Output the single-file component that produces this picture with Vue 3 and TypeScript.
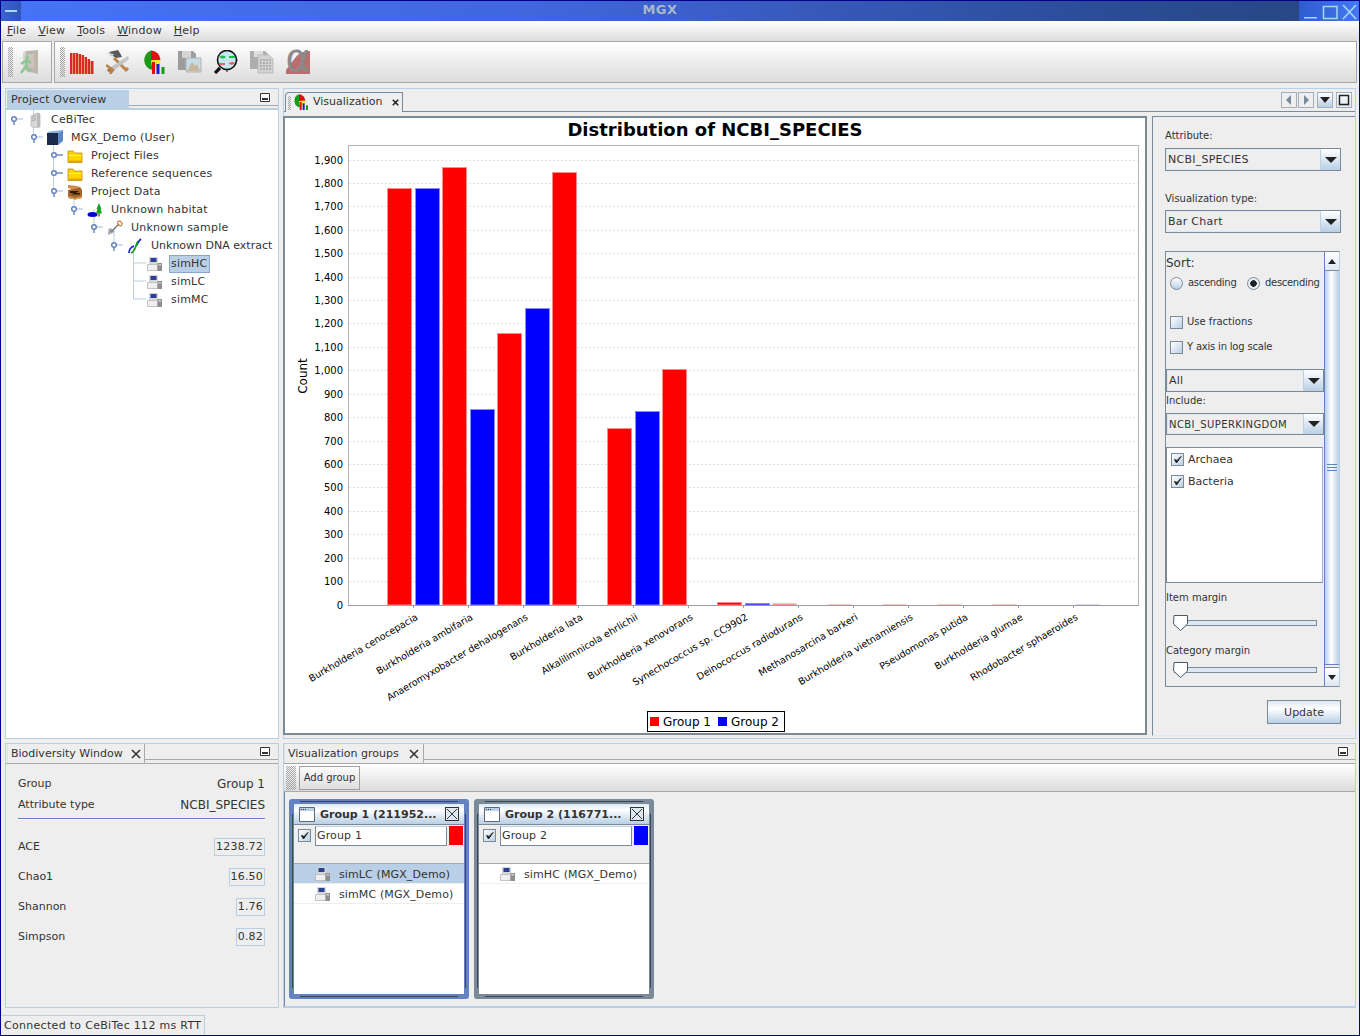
<template>
  <div class="window">
    <!-- icon sheet -->
    <svg class="sheet" width="0" height="0" aria-hidden="true">
      <symbol id="i-server" viewBox="0 0 16 16">
        <path d="M4 4 L10 1 L13 2 V15 L7 16 L4 14 Z" fill="#d8d8d8" stroke="#aaa" stroke-width=".6"/>
        <path d="M5 5 L9 3.5 M5 7 L9 5.5 M5 9 L9 7.5" stroke="#999" stroke-width=".8"/>
        <path d="M10 1 L13 2 V15 L10 15 Z" fill="#b9b9b9"/>
      </symbol>
      <symbol id="i-cube" viewBox="0 0 16 16">
        <path d="M0 3 H11 V15 H0 Z" fill="#1c2b4d"/>
        <path d="M11 3 L16 0 V11 L11 15 Z" fill="#5c88c9"/>
        <path d="M2 1.500 L16 0 L11 3 H0 Z" fill="#8fb0de"/>
      </symbol>
      <symbol id="i-folder" viewBox="0 0 16 16">
        <path d="M1 3 H6 L7.500 5 H15 V14.500 H1 Z" fill="#ffd500" stroke="#b88a10" stroke-width=".8"/>
        <path d="M1.500 7 H14.500 V8 H1.500 Z" fill="#ffee70"/>
        <path d="M1.500 12.500 H14.500 V14 H1.500 Z" fill="#e2a800"/>
      </symbol>
      <symbol id="i-box" viewBox="0 0 16 16">
        <path d="M1 6 L13 3 L15 6 V14 L8 15.500 L1 14 Z" fill="#a5642a"/>
        <path d="M1 1 L10 2 L13 3 L5 5 L1 4 Z" fill="#d08a44"/>
        <path d="M3 7 H12 L9 9 H13 V10.500 H4 L7 9 H3 Z" fill="#2d1a08"/>
        <path d="M1 12 L8 14 L15 12 V14 L8 15.500 L1 14 Z" fill="#d89a58"/>
      </symbol>
      <symbol id="i-habitat" viewBox="0 0 16 16">
        <ellipse cx="5.500" cy="12.500" rx="5" ry="2.500" fill="#0000dd"/>
        <path d="M12 1 L14.500 7 H13.500 L15 11.500 H9 L10.500 7 H9.500 Z" fill="#17a317"/>
        <path d="M11.300 11.500 H12.700 V14.500 H11.300 Z" fill="#7a4a1a"/>
      </symbol>
      <symbol id="i-sample" viewBox="0 0 16 16">
        <path d="M1 15 L1.500 9 L4 8 L7.500 12 Z" fill="#a8a8a8"/>
        <path d="M4 12 L12 4" stroke="#777" stroke-width="1.500"/>
        <path d="M11 5 L10.500 2 L13 1 L15.500 3.500 L14 6 Z" fill="none" stroke="#c9834a" stroke-width="1.200"/>
      </symbol>
      <symbol id="i-dna" viewBox="0 0 16 16">
        <path d="M2 15 C2 11 4 9 7 8 M9 8 C11 6 11 3 14 1" fill="none" stroke="#1b1be0" stroke-width="1.700"/>
        <path d="M4 15 C7 14 8 11 9 8 C9.500 6 10 4 11 3" fill="none" stroke="#13a013" stroke-width="1.700"/>
      </symbol>
      <symbol id="i-seq" viewBox="0 0 16 16">
        <path d="M2 1 H11 V8 H2 Z" fill="#d6d6d6"/>
        <path d="M3.500 2 H9.500 V6 H3.500 Z" fill="#2a3f97"/>
        <path d="M0.500 8.500 H10.500 V14.500 H0.500 Z" fill="#efefef" stroke="#b5b5b5" stroke-width=".8"/>
        <path d="M10.500 7 H15 V15 H10.500 Z" fill="#8e8e8e"/>
        <path d="M11.500 8 H14 V9.500 H11.500 Z" fill="#d0d0d0"/>
      </symbol>
      <symbol id="i-chart" viewBox="0 0 24 24">
        <path d="M9 10.500 L9 0.500 A9.500 10 0 0 1 18.500 10 Z" fill="#e21010"/>
        <path d="M9 10.500 L18.500 10 A9.500 10 0 0 1 10.500 20 Z" fill="#f2ec10"/>
        <path d="M9 10.500 L10.500 20 A9.500 10 0 0 1 9 0.500 Z" fill="#169c16"/>
        <path d="M10 12 H13 V24 H10 Z" fill="#e01010"/>
        <path d="M14.500 14 H17.500 V24 H14.500 Z" fill="#1a1ad0"/>
        <path d="M19.500 17 H22.500 V24 H19.500 Z" fill="#169c16"/>
      </symbol>
      <symbol id="i-exit" viewBox="0 0 24 24">
        <path d="M8 1 L20 0 V24 L8 21 Z" fill="#bdb6aa"/>
        <path d="M8 1 L5 2 V22 L8 21 Z" fill="#d9d5cc"/>
        <path d="M9.500 4 H16 V18 H9.500 Z" fill="#cbc6bc"/>
        <circle cx="9" cy="7.500" r="2" fill="#8cc897"/>
        <path d="M8.500 10 L3 14 M8.500 10 L13 13 M8.500 10 L8 16 L3 23 M8 16 L12 22" stroke="#8cc897" stroke-width="2.400" fill="none"/>
      </symbol>
      <symbol id="i-bars" viewBox="0 0 24 24">
        <path d="M0 3 H2 V24 H0 Z M3 3 H5 V24 H3 Z M6 3 H8 V24 H6 Z M9 4 H11 V24 H9 Z M12 5 H14 V24 H12 Z M15 7 H17 V24 H15 Z M18 9 H20 V24 H18 Z M21 11 H23.500 V24 H21 Z" fill="#d62a2a"/>
        <path d="M2 3 H3 V24 H2 Z M5 3 H6 V24 H5 Z M8 4 H9 V24 H8 Z M11 5 H12 V24 H11 Z M14 7 H15 V24 H14 Z M17 9 H18 V24 H17 Z M20 11 H21 V24 H20 Z" fill="#ef9a6a"/>
      </symbol>
      <symbol id="i-tools" viewBox="0 0 24 24">
        <path d="M3 2 L12 0 L14 3 L16 7 L10 8 L7 6 Z" fill="#5a5a5a"/>
        <path d="M1 3 L8 4 L6 7 Z" fill="#cfcfcf"/>
        <path d="M8 8 L20 20 L22 18" stroke="#b9834a" stroke-width="3" fill="none"/>
        <path d="M2 19 L22 6 L23 9 L6 22 Z" fill="#c4c4c4"/>
        <path d="M2 19 L6 22" stroke="#aa7a44" stroke-width="4"/>
        <path d="M0 15 L7 20 L4 24" stroke="#b9834a" stroke-width="2.500" fill="none"/>
      </symbol>
      <symbol id="i-floppy-pic" viewBox="0 0 24 24">
        <path d="M0 1 H15 L18 4 V20 H0 Z" fill="#9c9c9c"/>
        <path d="M4 1 H13 V8 H4 Z" fill="#d5d5d5"/>
        <path d="M8 8 H23 V22 H8 Z" fill="#c4dde7" stroke="#b2b2b2"/>
        <path d="M9 21 L14 12 L17 16 L19 14 L22 21 Z" fill="#c8b79c"/>
      </symbol>
      <symbol id="i-search" viewBox="0 0 24 24">
        <circle cx="13" cy="10" r="9.500" fill="#c5e7f1" stroke="#111" stroke-width="1.600"/>
        <path d="M5 7 Q9 4 12 7 Q9 10 5 7 Z" fill="#15c04a"/>
        <path d="M15 6 H21 V8 H15 Z" fill="#15c04a"/>
        <path d="M5 13 H11 V15 H5 Z M15 13 Q19 11 21 13 Q19 16 15 14 Z" fill="#e8605c"/>
        <path d="M13 0 V-1 M23.500 10 H24 M13 20 V22" stroke="#111"/>
        <path d="M6 18 L1 23" stroke="#111" stroke-width="3.200"/>
      </symbol>
      <symbol id="i-floppy-doc" viewBox="0 0 24 24">
        <path d="M0 1 H15 L18 4 V19 H0 Z" fill="#adadad"/>
        <path d="M4 1 H13 V7 H4 Z" fill="#dedede"/>
        <path d="M8 5 H19 L23 9 V23 H8 Z" fill="#d2d2d2" stroke="#bbb"/>
        <path d="M10 10 H21 M10 13 H21 M10 16 H21 M10 19 H21" stroke="#8d8d8d" stroke-dasharray="2 1"/>
      </symbol>
      <symbol id="i-alpha" viewBox="0 0 24 24">
        <path d="M0 20 L9 8 Q14 1 24 1 V24 H0 Z" fill="#bb6e6e"/>
      </symbol>
      <symbol id="i-frame" viewBox="0 0 16 16">
        <path d="M.5 1.500 H15.500 V15.500 H.5 Z" fill="#fff" stroke="#5a6878"/>
        <path d="M1 2 H15 V5 H1 Z" fill="#b8cfe5"/>
        <path d="M2 3.500 H3 M4 3.500 H5 M6 3.500 H7" stroke="#333"/>
      </symbol>
      <symbol id="i-x" viewBox="0 0 10 10">
        <path d="M1 1 L9 9 M9 1 L1 9" stroke="#333" stroke-width="1.600"/>
      </symbol>
      <symbol id="i-check" viewBox="0 0 13 13">
        <path d="M3.500 6.500 L5.500 10 L10 3.500 L6 7.500 Z" fill="#222" stroke="#222"/>
      </symbol>
      <symbol id="i-min" viewBox="0 0 10 9">
        <path d="M.5 .5 H9.500 V8.500 H.5 Z" fill="#fff" stroke="#333"/>
        <path d="M2 5 H8 V7 H2 Z" fill="#333"/>
      </symbol>
    </svg>

    <header class="titlebar">
      <div class="tb-menu"><span class="tb-dash"></span></div>
      <div class="tb-title">MGX</div>
      <div class="tb-buttons">
        <svg width="60" height="20" viewBox="0 0 60 20">
          <path d="M5 16 H18 V17.500 H5 Z" fill="#a6d8f2"/>
          <rect x="24.500" y="5.500" width="13.500" height="12" fill="none" stroke="#a6d8f2" stroke-width="1.500"/>
          <path d="M44 4 L57 18 M57 4 L44 18" stroke="#a6d8f2" stroke-width="1.600"/>
        </svg>
      </div>
    </header>

    <nav class="menubar">
      <span v-for="m in menus" :key="m.rest" class="menu-item"><u>{{ m.key }}</u>{{ m.rest }}</span>
    </nav>

    <div class="toolbars">
      <div class="toolbar toolbar-short">
        <span class="grip"></span>
        <svg class="tool-icon exit-icon"><use href="#i-exit" /></svg>
      </div>
      <div class="toolbar toolbar-long">
        <span class="grip"></span>
        <span v-for="t in tools" :key="t" class="tool-slot">
          <svg class="tool-icon"><use :href="`#${t}`" /></svg>
          <span v-if="t === 'i-alpha'" class="alpha-mark">α</span>
        </span>
      </div>
    </div>

    <main class="workspace">
      <!-- project overview -->
      <section class="panel">
        <div class="panel-head head-active">
          <div class="dock-tab tab-project">Project Overview</div>
          <div class="head-fill">
            <svg class="min-btn"><use href="#i-min" /></svg>
          </div>
        </div>
        <div class="tree">
          <svg class="tree-lines" width="272" height="210" viewBox="6 110 272 210">
            <path d="M33.500 110 V137 M53.500 137 V191 M74 191 V209 M94 209 V227 M114 227 V245 M133.500 245 V299 M133.500 263 H146 M133.500 281 H146 M133.500 299 H146" stroke="#b8cfe5" fill="none" />
            <g v-for="(n, i) in treeNodes" :key="n.label">
              <template v-if="n.handle !== 'none'">
                <path :d="`M${handleX(n.depth) + 3} ${rowY(i)} H${handleX(n.depth) + 9}`" :stroke="n.handle === 'closed' ? '#6382bf' : '#b8cfe5'" stroke-width="1.400" />
                <path v-if="n.handle === 'open'" :d="`M${handleX(n.depth)} ${rowY(i)} V${rowY(i) + 6}`" stroke="#6382bf" stroke-width="1.400" />
                <circle :cx="handleX(n.depth)" :cy="rowY(i)" r="2.300" fill="#fff" stroke="#6382bf" stroke-width="1.500" />
              </template>
            </g>
          </svg>
          <div v-for="n in treeNodes" :key="n.label" class="tree-row" :style="{ paddingLeft: 21 + n.depth * 20 + 'px' }">
            <svg class="node-icon"><use :href="`#${n.icon}`" /></svg>
            <span class="node-label" :class="{ 'node-selected': n.selected, 'node-tight': n.tight }">{{ n.label }}</span>
          </div>
        </div>
      </section>

      <!-- visualization -->
      <section class="panel">
        <div class="viz-head">
          <div class="viz-tab">
            <span class="grip grip-tab"></span>
            <svg class="tab-icon"><use href="#i-chart" /></svg>
            <span class="viz-tab-label">Visualization</span>
            <svg class="tab-close" viewBox="0 0 10 10"><path d="M2 2 L8 8 M8 2 L2 8" stroke="#222" stroke-width="1.800" /></svg>
          </div>
          <div class="viz-nav">
            <span class="nav-btn nav-left"><svg width="14" height="14"><path d="M9 2 V12 L4 7 Z" fill="#7a8a99" /></svg></span>
            <span class="nav-btn nav-right"><svg width="14" height="14"><path d="M5 2 V12 L10 7 Z" fill="#7a8a99" /></svg></span>
            <span class="nav-btn nav-drop"><svg width="14" height="14"><path d="M2 4 H12 L7 10 Z" fill="#222" /></svg></span>
            <span class="nav-btn nav-max"><svg width="14" height="14"><rect x="2.500" y="2.500" width="9" height="9" fill="none" stroke="#222" stroke-width="1.500" /></svg></span>
          </div>
        </div>
        <div class="viz-body">
          <div class="chart-frame">
            <svg class="chart" width="860" height="615" viewBox="285 118 860 615">
              <text x="715" y="136" text-anchor="middle" class="chart-title">Distribution of NCBI_SPECIES</text>
              <rect x="348.500" y="145.500" width="790" height="460" fill="#fff" stroke="#b4b4b4" />
              <g v-for="v in gridValues" :key="v">
                <line v-if="v > 0" x1="349" :x2="1138" :y1="lineY(v)" :y2="lineY(v)" stroke="#e2e2e2" stroke-dasharray="2 2" />
                <text x="343" :y="lineY(v) + 3.5" text-anchor="end" class="axis-num">{{ v === 0 ? '0' : v.toLocaleString('en-US') }}</text>
              </g>
              <text class="axis-name" transform="translate(307 376) rotate(-90)" text-anchor="middle">Count</text>
              <line x1="348" x2="1139" y1="605.500" y2="605.500" stroke="#9c9c9c" />
              <g v-for="(c, i) in categories" :key="c.name">
                <line :x1="tickX(i)" :x2="tickX(i)" y1="606" y2="608" stroke="#9c9c9c" />
                <rect v-if="c.red" :x="tickX(i) - 26" :y="lineY(c.red)" width="24" :height="605 - lineY(c.red)" :class="c.red < 8 ? 'bar-faint-r' : 'bar-r'" />
                <rect v-if="c.blue" :x="tickX(i) + 2" :y="lineY(c.blue)" width="24" :height="605 - lineY(c.blue)" :class="c.blue < 4 ? 'bar-faint-b' : 'bar-b'" />
                <text :transform="`translate(${tickX(i) + 5} 619) rotate(-30.5)`" text-anchor="end" class="cat-label">{{ c.name }}</text>
              </g>
              <rect x="647.500" y="711.500" width="137" height="20" fill="#fff" stroke="#000" />
              <rect x="650" y="717" width="9" height="9" fill="#f00" />
              <text x="663" y="726" class="legend-text">Group 1</text>
              <rect x="718" y="717" width="9" height="9" fill="#00f" />
              <text x="731" y="726" class="legend-text">Group 2</text>
            </svg>
          </div>

          <aside class="config">
            <label class="cfg-label cfg-first">Attribute:</label>
            <div class="combo cfg-combo"><span class="combo-text">NCBI_SPECIES</span><span class="combo-arrow"><svg width="12" height="8"><path d="M0 1 H12 L6 7 Z" fill="#222" /></svg></span></div>
            <label class="cfg-label cfg-second">Visualization type:</label>
            <div class="combo cfg-combo"><span class="combo-text">Bar Chart</span><span class="combo-arrow"><svg width="12" height="8"><path d="M0 1 H12 L6 7 Z" fill="#222" /></svg></span></div>

            <div class="scroll-pane">
              <div class="scroll-content">
                <div class="sort-title">Sort:</div>
                <div class="radio-row">
                  <span class="radio-item"><span class="radio"></span>ascending</span>
                  <span class="radio-item"><span class="radio radio-on"></span>descending</span>
                </div>
                <div class="check-row row-fractions"><span class="check"></span>Use fractions</div>
                <div class="check-row row-log"><span class="check"></span>Y axis in log scale</div>
                <div class="combo combo-all"><span class="combo-text">All</span><span class="combo-arrow"><svg width="12" height="8"><path d="M0 1 H12 L6 7 Z" fill="#222" /></svg></span></div>
                <div class="cfg-label inc-label">Include:</div>
                <div class="combo combo-inc"><span class="combo-text text-small">NCBI_SUPERKINGDOM</span><span class="combo-arrow"><svg width="12" height="8"><path d="M0 1 H12 L6 7 Z" fill="#222" /></svg></span></div>
                <div class="check-list">
                  <div v-for="k in kingdoms" :key="k" class="list-row"><span class="check"><svg width="13" height="13"><use href="#i-check" /></svg></span>{{ k }}</div>
                </div>
                <div class="cfg-label item-label">Item margin</div>
                <svg class="slider slider-a" width="145" height="16">
                  <rect x="1.500" y="5.500" width="142" height="5" fill="#dde8f3" stroke="#7a8a99" />
                  <path d="M1 .5 H14.500 V9 L7.500 15.500 L.5 9 Z" fill="#fff" stroke="#4a5868" />
                </svg>
                <div class="cfg-label cat-margin-label">Category margin</div>
                <svg class="slider slider-b" width="145" height="16">
                  <rect x="1.500" y="5.500" width="142" height="5" fill="#dde8f3" stroke="#7a8a99" />
                  <path d="M1 .5 H14.500 V9 L7.500 15.500 L.5 9 Z" fill="#fff" stroke="#4a5868" />
                </svg>
              </div>
              <div class="scrollbar">
                <div class="sb-btn"><svg width="14" height="8"><path d="M3 7 H11 L7 2 Z" fill="#222" /></svg></div>
                <div class="sb-thumb"><span class="sb-lines"></span></div>
                <div class="sb-btn"><svg width="14" height="8"><path d="M3 2 H11 L7 7 Z" fill="#222" /></svg></div>
              </div>
            </div>
            <button class="update-btn">Update</button>
          </aside>
        </div>
      </section>

      <!-- biodiversity -->
      <section class="panel">
        <div class="panel-head">
          <div class="dock-tab tab-bio">Biodiversity Window<svg class="tab-x"><use href="#i-x" /></svg></div>
          <div class="head-fill">
            <svg class="min-btn"><use href="#i-min" /></svg>
          </div>
        </div>
        <div class="bio">
          <div class="bio-row"><span>Group</span><span class="bio-big">Group 1</span></div>
          <div class="bio-row bio-row-2"><span>Attribute type</span><span class="bio-big">NCBI_SPECIES</span></div>
          <div class="bio-sep"></div>
          <div v-for="s in stats" :key="s.name" class="stat-row">
            <span>{{ s.name }}</span>
            <span class="stat-box">{{ s.value }}</span>
          </div>
        </div>
      </section>

      <!-- groups -->
      <section class="panel">
        <div class="panel-head">
          <div class="dock-tab tab-groups">Visualization groups<svg class="tab-x"><use href="#i-x" /></svg></div>
          <div class="head-fill">
            <svg class="min-btn min-right"><use href="#i-min" /></svg>
          </div>
        </div>
        <div class="group-toolbar">
          <span class="grip grip-wide"></span>
          <button class="add-btn">Add group</button>
        </div>
        <div class="group-area">
          <div v-for="g in groups" :key="g.name" class="group-frame" :class="{ 'frame-active': g.active }">
            <div class="frame-title">
              <svg class="frame-icon"><use href="#i-frame" /></svg>
              <span class="frame-name">{{ g.title }}</span>
              <span class="frame-close"><svg width="12" height="12" viewBox="0 0 12 12"><path d="M1 1 L11 11 M11 1 L1 11" stroke="#333" /></svg></span>
            </div>
            <div class="frame-edit">
              <span class="check"><svg width="13" height="13"><use href="#i-check" /></svg></span>
              <span class="frame-input">{{ g.name }}</span>
              <span class="frame-color" :style="{ background: g.color }"></span>
            </div>
            <div class="frame-header"></div>
            <div class="frame-list">
              <div v-for="r in g.rows" :key="r.label" class="frame-row" :class="{ 'frame-row-sel': r.selected }">
                <svg class="node-icon"><use href="#i-seq" /></svg>
                {{ r.label }}
              </div>
            </div>
          </div>
        </div>
      </section>
    </main>

    <footer class="statusbar">
      <div class="status-cell">Connected to CeBiTec 112 ms RTT</div>
    </footer>
  </div>
</template>

<script setup lang="ts">
interface TreeNode {
  label: string;
  depth: number;
  icon: string;
  handle: 'open' | 'closed' | 'none';
  selected?: boolean;
  tight?: boolean;
}

const menus = [
  { key: 'F', rest: 'ile' },
  { key: 'V', rest: 'iew' },
  { key: 'T', rest: 'ools' },
  { key: 'W', rest: 'indow' },
  { key: 'H', rest: 'elp' },
];

const tools = ['i-bars', 'i-tools', 'i-chart', 'i-floppy-pic', 'i-search', 'i-floppy-doc', 'i-alpha'];

const treeNodes: TreeNode[] = [
  { label: 'CeBiTec', depth: 0, icon: 'i-server', handle: 'open' },
  { label: 'MGX_Demo (User)', depth: 1, icon: 'i-cube', handle: 'open' },
  { label: 'Project Files', depth: 2, icon: 'i-folder', handle: 'closed' },
  { label: 'Reference sequences', depth: 2, icon: 'i-folder', handle: 'closed' },
  { label: 'Project Data', depth: 2, icon: 'i-box', handle: 'open' },
  { label: 'Unknown habitat', depth: 3, icon: 'i-habitat', handle: 'open' },
  { label: 'Unknown sample', depth: 4, icon: 'i-sample', handle: 'open' },
  { label: 'Unknown DNA extract', depth: 5, icon: 'i-dna', handle: 'open', tight: true },
  { label: 'simHC', depth: 6, icon: 'i-seq', handle: 'none', selected: true },
  { label: 'simLC', depth: 6, icon: 'i-seq', handle: 'none' },
  { label: 'simMC', depth: 6, icon: 'i-seq', handle: 'none' },
];

const handleX = (depth: number) => 14 + depth * 20;
const rowY = (i: number) => 119 + i * 18;

const gridValues = Array.from({ length: 20 }, (_, i) => i * 100);
const lineY = (v: number) => Math.floor(605 - v * 0.2342) + 0.5;
const tickX = (i: number) => 413.5 + i * 55;

const categories = [
  { name: 'Burkholderia cenocepacia', red: 1780, blue: 1780 },
  { name: 'Burkholderia ambifaria', red: 1870, blue: 835 },
  { name: 'Anaeromyxobacter dehalogenans', red: 1160, blue: 1265 },
  { name: 'Burkholderia lata', red: 1845, blue: 0 },
  { name: 'Alkalilimnicola ehrlichii', red: 755, blue: 825 },
  { name: 'Burkholderia xenovorans', red: 1005, blue: 0 },
  { name: 'Synechococcus sp. CC9902', red: 10, blue: 7 },
  { name: 'Deinococcus radiodurans', red: 7, blue: 0 },
  { name: 'Methanosarcina barkeri', red: 4, blue: 0 },
  { name: 'Burkholderia vietnamiensis', red: 3, blue: 0 },
  { name: 'Pseudomonas putida', red: 3, blue: 0 },
  { name: 'Burkholderia glumae', red: 3, blue: 0 },
  { name: 'Rhodobacter sphaeroides', red: 0, blue: 3 },
];

const kingdoms = ['Archaea', 'Bacteria'];

const stats = [
  { name: 'ACE', value: '1238.72' },
  { name: 'Chao1', value: '16.50' },
  { name: 'Shannon', value: '1.76' },
  { name: 'Simpson', value: '0.82' },
];

const groups = [
  {
    name: 'Group 1',
    title: 'Group 1 (211952...',
    color: '#f00',
    active: true,
    rows: [
      { label: 'simLC (MGX_Demo)', selected: true },
      { label: 'simMC (MGX_Demo)', selected: false },
    ],
  },
  {
    name: 'Group 2',
    title: 'Group 2 (116771...',
    color: '#00f',
    active: false,
    rows: [{ label: 'simHC (MGX_Demo)', selected: false }],
  },
];
</script>

<style>
html,
body {
  margin: 0;
  background: #eee;
}
</style>

<style scoped>
.window {
  box-sizing: border-box;
  width: 1360px;
  height: 1036px;
  border: 1px solid #00008b;
  background: #eee;
  font-family: "DejaVu Sans", sans-serif;
  font-size: 11px;
  color: #333;
  display: flex;
  flex-direction: column;
  overflow: hidden;
}

.sheet {
  position: absolute;
}

.titlebar {
  height: 20px;
  display: flex;
  align-items: stretch;
  background: linear-gradient(90deg, #4474f6 0%, #4166dc 40%, #2c4d98 80%, #27457f 100%);
}

.tb-menu {
  width: 20px;
  background: linear-gradient(90deg, #3a63d4, #2f55b8);
  display: flex;
  align-items: center;
  justify-content: center;
}

.tb-dash {
  width: 12px;
  height: 2px;
  background: #a6d8f2;
}

.tb-title {
  flex: 1;
  text-align: center;
  font-weight: bold;
  font-size: 13px;
  letter-spacing: .5px;
  line-height: 17px;
  color: #a9b7cf;
}

.tb-buttons {
  width: 60px;
  background: linear-gradient(90deg, #2e5bd0, #4478f2);
}

.menubar {
  height: 20px;
  box-sizing: border-box;
  display: flex;
  align-items: center;
  gap: 12px;
  padding: 0 0 2px 6px;
  letter-spacing: .2px;
  background: linear-gradient(#fff, #dcdcdc);
}

.toolbars {
  height: 42px;
  display: flex;
  gap: 2px;
  padding-left: 1px;
  padding-right: 2px;
}

.toolbar {
  box-sizing: border-box;
  border: 1px solid #a8a8a8;
  background: linear-gradient(#fff, #dcdcdc);
  display: flex;
  align-items: center;
  padding-left: 5px;
}

.toolbar-short {
  width: 50px;
}

.toolbar-long {
  flex: 1;
  padding-left: 5px;
}

.toolbar-long .grip {
  margin-right: -1px;
}

.grip {
  flex: none;
  width: 5px;
  height: 30px;
  background: repeating-conic-gradient(#a4a4a4 0 25%, transparent 0 50%) 0 0 / 2px 2px;
}

.tool-icon {
  width: 24px;
  height: 24px;
}

.exit-icon {
  margin-left: 5px;
}

.tool-slot {
  position: relative;
  width: 36px;
  height: 24px;
  display: flex;
  justify-content: center;
}

.alpha-mark {
  position: absolute;
  inset: 0;
  text-align: center;
  font-size: 38px;
  line-height: 16px;
  color: #8a8a8a;
}

.workspace {
  flex: 1;
  display: grid;
  grid-template-columns: 274px 1073px;
  grid-template-rows: 651px 265px;
  gap: 4px;
  padding: 5px 0 0 4px;
}

.panel {
  box-sizing: border-box;
  border: 1px solid #b8cfe5;
  display: flex;
  flex-direction: column;
  min-width: 0;
}

.panel-head {
  height: 20px;
  box-sizing: border-box;
  flex: none;
  display: flex;
  border-bottom: 1px solid #a8a8a8;
  padding-top: 0;
}

.head-active {
  border-bottom: 2px solid #b8cfe5;
  padding-top: 1px;
  height: 21px;
}

.dock-tab {
  box-sizing: border-box;
  display: flex;
  align-items: center;
  padding-left: 3px;
  margin-left: 1px;
  border-right: 1px solid #a8a8a8;
  border-left: 1px solid #e0e0e0;
  line-height: 14px;
}

.tab-project {
  width: 122px;
  background: #b8cfe5;
  border: 0;
  padding-top: 1px;
  padding-left: 4px;
  letter-spacing: .15px;
}

.tab-bio {
  width: 138px;
}

.tab-groups {
  width: 140px;
  margin-left: 0;
  padding-left: 3px;
}

.tab-x {
  width: 10px;
  height: 10px;
  margin-left: auto;
  margin-right: 3px;
}

.head-fill {
  flex: 1;
  height: 15px;
  border-bottom: 1px solid #a8a8a8;
  display: flex;
  align-items: center;
  justify-content: flex-end;
  padding-right: 8px;
}

.min-btn {
  width: 10px;
  height: 9px;
}

.tree {
  position: relative;
  flex: 1;
  background: #fff;
  padding-top: 1px;
}

.tree-lines {
  position: absolute;
  left: 0;
  top: 0;
}

.tree-row {
  position: relative;
  height: 18px;
  display: flex;
  align-items: center;
  gap: 6px;
  white-space: nowrap;
}

.node-icon {
  width: 16px;
  height: 16px;
  flex: none;
}

.node-label {
  padding: 1px;
  line-height: 14px;
  border: 1px solid transparent;
  letter-spacing: .2px;
}

.node-tight {
  letter-spacing: 0;
}

.node-selected {
  background: #b8cfe5;
  border-color: #8aa6cf;
  padding-right: 2px;
}

/* visualization */
.viz-head {
  height: 23px;
  flex: none;
  box-sizing: border-box;
  display: flex;
  padding-top: 3px;
  border-bottom: 1px solid #7a8a99;
}

.viz-tab {
  box-sizing: border-box;
  width: 118px;
  height: 20px;
  margin-left: 1px;
  border: 1px solid #7a8a99;
  border-bottom: 0;
  border-radius: 4px 0 0 0;
  background: #eee;
  display: flex;
  align-items: center;
}

.grip-tab {
  width: 3px;
  height: 14px;
  margin-left: 2px;
}

.tab-icon {
  width: 16px;
  height: 16px;
  margin: 0 0 2px 2px;
}

.viz-tab-label {
  margin: 0 0 2px 4px;
}

.tab-close {
  width: 9px;
  height: 9px;
  margin-left: 9px;
}

.viz-nav {
  margin-left: auto;
  display: flex;
  padding-right: 3px;
  height: 16px;
}

.nav-btn {
  box-sizing: border-box;
  width: 16px;
  height: 16px;
  border: 1px solid #a3b0bc;
  display: flex;
  align-items: center;
  justify-content: center;
  margin-left: 1px;
}

.nav-drop {
  margin-left: 3px;
  background: linear-gradient(#fff, #b8cfe5);
}

.nav-max {
  margin-left: 3px;
  background: linear-gradient(#fff, #dde8f3);
}

.viz-body {
  flex: 1;
  display: flex;
  gap: 5px;
  padding-top: 4px;
  min-height: 0;
}

.chart-frame {
  box-sizing: border-box;
  width: 864px;
  height: 619px;
  margin-left: -1px;
  border: 2px solid #7a8a99;
  background: #fff;
  flex: none;
}

.chart {
  display: block;
}

.chart-title {
  font-size: 18px;
  font-weight: bold;
  fill: #000;
}

.axis-num {
  font-size: 10px;
  fill: #000;
}

.axis-name {
  font-size: 12px;
  fill: #000;
}

.cat-label {
  font-size: 9.6px;
  fill: #000;
}

.legend-text {
  font-size: 12px;
  fill: #000;
}

.bar-r {
  fill: #f00;
  stroke: #ff8a8a;
  stroke-width: 1;
}

.bar-b {
  fill: #00f;
  stroke: #8a8aff;
  stroke-width: 1;
}

.bar-faint-r {
  fill: #ff9090;
}

.bar-faint-b {
  fill: #b4b4ff;
}

.config {
  flex: 1;
  box-sizing: border-box;
  height: 620px;
  border-left: 1px solid #7a8a99;
  border-top: 1px solid #7a8a99;
  border-bottom: 1px solid #dde8f3;
  padding-left: 12px;
  display: flex;
  flex-direction: column;
}

.cfg-label {
  display: block;
  font-size: 10px;
  line-height: 12px;
  height: 12px;
}

.cfg-first {
  margin-top: 13px;
}

.cfg-second {
  margin-top: 22px;
}

.combo {
  box-sizing: border-box;
  display: flex;
  border: 1px solid #7a8a99;
  background: #eee;
}

.cfg-combo {
  width: 176px;
  height: 23px;
  margin-top: 6px;
}

.cfg-second + .cfg-combo {
  margin-top: 5px;
}

.combo-text {
  flex: 1;
  box-sizing: border-box;
  border: 1px solid #dde8f3;
  border-right: 1px solid #b8cfe5;
  padding-left: 1px;
  line-height: 19px;
  letter-spacing: .25px;
}

.text-small {
  font-size: 10px;
  letter-spacing: .4px;
}

.combo-arrow {
  width: 19px;
  display: flex;
  align-items: center;
  justify-content: center;
  background: linear-gradient(#fff, #b8cfe5);
}

.scroll-pane {
  box-sizing: border-box;
  width: 175px;
  height: 436px;
  margin-top: 18px;
  border: 1px solid #7a8a99;
  border-right-color: #b8cfe5;
  display: flex;
}

.scroll-content {
  width: 158px;
  flex: none;
  display: flex;
  flex-direction: column;
}

.sort-title {
  font-size: 12px;
  line-height: 14px;
  margin-top: 4px;
}

.radio-row {
  display: flex;
  margin-top: 6px;
  padding-left: 4px;
  font-size: 10px;
  line-height: 14px;
  white-space: nowrap;
  letter-spacing: -.3px;
}

.radio-item {
  width: 77px;
  display: flex;
  align-items: center;
  gap: 5px;
}

.radio {
  box-sizing: border-box;
  width: 13px;
  height: 13px;
  border: 1px solid #7a8a99;
  border-radius: 50%;
  background: linear-gradient(#fff, #b8cfe5);
  flex: none;
}

.radio-on {
  background: radial-gradient(circle, #222 0 3px, #e4eef6 3.5px);
}

.check-row {
  display: flex;
  align-items: center;
  gap: 4px;
  padding-left: 4px;
  font-size: 10px;
  line-height: 14px;
  height: 14px;
}

.row-fractions {
  margin-top: 25px;
}

.row-log {
  margin-top: 11px;
  letter-spacing: -.2px;
}

.check {
  box-sizing: border-box;
  width: 13px;
  height: 13px;
  flex: none;
  border: 1px solid #7a8a99;
  background: linear-gradient(135deg, #fff, #b8cfe5);
  display: flex;
  align-items: center;
  justify-content: center;
}

.check svg {
  flex: none;
  margin: -1px;
}

.combo-all {
  margin-top: 15px;
  height: 23px;
}

.inc-label {
  margin-top: 3px;
}

.combo-inc {
  margin-top: 6px;
  height: 22px;
}

.check-list {
  box-sizing: border-box;
  margin-top: 12px;
  width: 157px;
  height: 136px;
  background: #fff;
  border: 1px solid #7a8a99;
  border-right-color: #a3b0bc;
  padding-left: 4px;
}

.list-row {
  height: 22px;
  display: flex;
  align-items: center;
  gap: 4px;
}

.item-label {
  margin-top: 9px;
}

.slider {
  display: block;
  margin-left: 7px;
}

.slider-a {
  margin-top: 11px;
}

.cat-margin-label {
  margin-top: 14px;
}

.slider-b {
  margin-top: 5px;
}

.scrollbar {
  flex: 1;
  display: flex;
  flex-direction: column;
  border-left: 1px solid #6382bf;
}

.sb-btn {
  height: 18px;
  flex: none;
  display: flex;
  align-items: center;
  justify-content: center;
  background: linear-gradient(#fff, #dde8f3);
  border-bottom: 1px solid #7a8a99;
}

.sb-btn:last-child {
  border-bottom: 0;
  border-top: 1px solid #7a8a99;
}

.sb-thumb {
  flex: 1;
  margin-bottom: 2px;
  border-bottom: 1px solid #6382bf;
  background: linear-gradient(90deg, #b8cfe5, #fff 45%, #b8cfe5);
  display: flex;
  align-items: center;
  justify-content: center;
}

.sb-lines {
  width: 10px;
  height: 5px;
  border-top: 1px solid #6382bf;
  border-bottom: 1px solid #6382bf;
  background: linear-gradient(#6382bf, #6382bf) center / 100% 1px no-repeat;
}

.update-btn {
  box-sizing: border-box;
  width: 74px;
  height: 24px;
  margin: 13px 0 0 102px;
  border: 1px solid #7a8a99;
  background: linear-gradient(#dde8f3, #fff 35%, #b8cfe5);
  font: inherit;
  color: #333;
  padding: 0;
}

/* biodiversity */
.bio {
  padding: 13px 13px 0 12px;
}

.bio-row {
  display: flex;
  justify-content: space-between;
  height: 14px;
  line-height: 14px;
}

.bio-row-2 {
  margin-top: 7px;
}

.bio-big {
  font-size: 12px;
}

.bio-sep {
  margin-top: 6px;
  height: 1px;
  background: #6382bf;
  border-bottom: 1px solid #fff;
}

.stat-row {
  display: flex;
  justify-content: space-between;
  align-items: center;
  height: 17px;
  margin-top: 13px;
}

.bio-sep + .stat-row {
  margin-top: 18px;
}

.stat-box {
  box-sizing: border-box;
  height: 18px;
  line-height: 16px;
  padding: 0 1px;
  border: 1px solid #b8cfe5;
  font-size: 11px;
  letter-spacing: .2px;
}

/* groups */
.tab-groups .tab-x {
  margin-right: 4px;
}

.min-right {
  margin-right: -1px;
}

.group-toolbar {
  height: 28px;
  flex: none;
  box-sizing: border-box;
  display: flex;
  align-items: center;
  background: linear-gradient(#fff, #dcdcdc);
  border-bottom: 1px solid #a8a8a8;
  padding-left: 2px;
}

.grip-wide {
  width: 10px;
  height: 24px;
}

.add-btn {
  box-sizing: border-box;
  width: 61px;
  height: 24px;
  margin-left: 3px;
  padding: 0;
  border: 1px solid #a0a0a0;
  background: transparent;
  font: inherit;
  font-size: 10px;
  color: #333;
}

.group-area {
  flex: 1;
  display: flex;
  gap: 5px;
  padding: 7px 0 0 4px;
  border-left: 1px solid #7a8a99;
  border-bottom: 1px solid #b8cfe5;
}

.group-frame {
  position: relative;
  box-sizing: border-box;
  width: 180px;
  height: 200px;
  border: 5px solid #7a8a99;
  border-radius: 3px;
  background: #fff;
  display: flex;
  flex-direction: column;
}

.frame-active {
  border-color: #6382bf;
}

.group-frame::before {
  content: "";
  position: absolute;
  left: 6px;
  right: 6px;
  top: -3px;
  bottom: -3px;
  border-top: 1px solid #3a4654;
  border-bottom: 1px solid #3a4654;
  pointer-events: none;
}

.group-frame::after {
  content: "";
  position: absolute;
  left: -2px;
  right: -2px;
  top: 10px;
  bottom: 6px;
  border-left: 1px solid #3a4654;
  border-right: 1px solid #3a4654;
  pointer-events: none;
}

.frame-title {
  height: 21px;
  flex: none;
  box-sizing: border-box;
  display: flex;
  align-items: center;
  padding-left: 5px;
  background: linear-gradient(#dde8f3, #fff 30%, #b8cfe5);
  border-bottom: 1px solid #7a8a99;
}

.frame-icon {
  width: 16px;
  height: 16px;
  flex: none;
}

.frame-name {
  margin-left: 5px;
  font-weight: bold;
  white-space: nowrap;
  width: 125px;
}

.frame-close {
  box-sizing: border-box;
  width: 14px;
  height: 14px;
  border: 1px solid #333;
  display: flex;
  align-items: center;
  justify-content: center;
  background: #dde8f3;
}

.frame-edit {
  height: 21px;
  flex: none;
  box-sizing: border-box;
  display: flex;
  align-items: center;
  background: #eee;
  padding-left: 4px;
}

.frame-input {
  box-sizing: border-box;
  width: 132px;
  height: 20px;
  margin-left: 4px;
  padding-left: 1px;
  line-height: 18px;
  background: #fff;
  border: 1px solid #7a8a99;
  border-top: 1px solid #b8cfe5;
  letter-spacing: .15px;
}

.frame-color {
  width: 14px;
  height: 19px;
  margin-left: 2px;
}

.frame-header {
  height: 18px;
  flex: none;
  box-sizing: border-box;
  background: #eee;
  border-bottom: 1px solid #a8a8a8;
}

.frame-row {
  box-sizing: border-box;
  height: 20px;
  display: flex;
  align-items: center;
  gap: 8px;
  padding: 1px 0 0 21px;
  border-bottom: 1px solid #eee;
  white-space: nowrap;
  letter-spacing: .12px;
}

.frame-row-sel {
  background: #b8cfe5;
}

/* status */
.statusbar {
  height: 20px;
  flex: none;
}

.status-cell {
  box-sizing: border-box;
  width: 204px;
  height: 20px;
  border-top: 1px solid #b8cfe5;
  border-right: 1px solid #b8cfe5;
  padding-left: 3px;
  line-height: 19px;
  white-space: nowrap;
  letter-spacing: .3px;
}
</style>
